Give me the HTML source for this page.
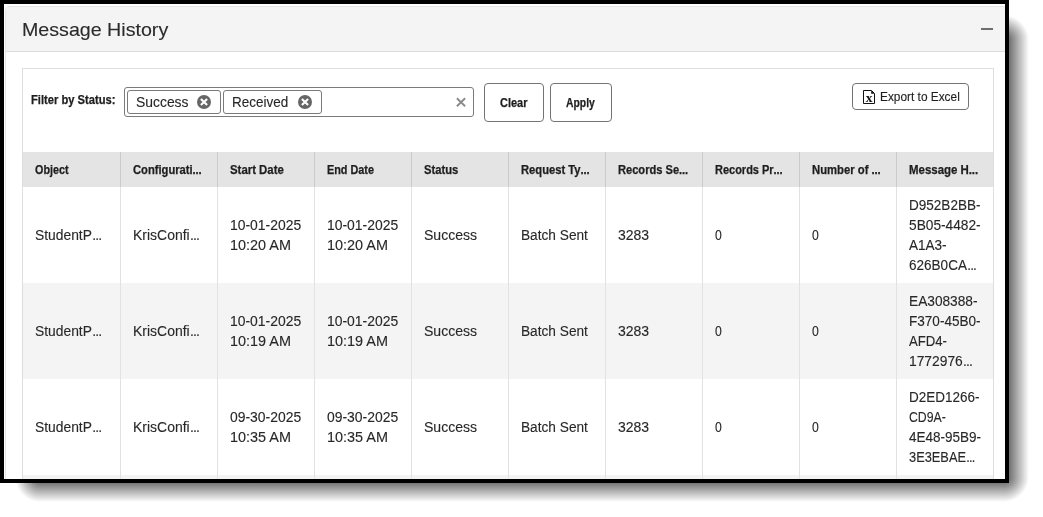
<!DOCTYPE html>
<html>
<head>
<meta charset="utf-8">
<title>Message History</title>
<style>
  * { box-sizing: border-box; margin: 0; padding: 0; }
  html, body { width: 1043px; height: 517px; background: #fff; overflow: hidden; }
  body { font-family: "Liberation Sans", sans-serif; color: #333; position: relative; }

  /* outer screenshot frame */
  #frame {
    position: absolute; left: 0; top: 0; width: 1009px; height: 483px;
    border: 4px solid #000; background: #fff; overflow: hidden; z-index: 2;
  }
  /* soft drop shadow: 9-slice (linear edges, radial corners) */
  #shadow { position: absolute; left: 15px; top: 15px; width: 1014px; height: 487px; z-index: 1; }
  #shadow i { position: absolute; display: block; }
  #shadow .m  { left: 25px; top: 25px; right: 25px; bottom: 25px; background: rgba(0,0,0,0.70); }
  #shadow .r  { right: 0; top: 25px; bottom: 25px; width: 25px; background: linear-gradient(to right, rgba(0,0,0,0.70), rgba(0,0,0,0)); }
  #shadow .l  { left: 0; top: 25px; bottom: 25px; width: 25px; background: linear-gradient(to left, rgba(0,0,0,0.70), rgba(0,0,0,0)); }
  #shadow .b  { bottom: 0; left: 25px; right: 25px; height: 25px; background: linear-gradient(to bottom, rgba(0,0,0,0.70), rgba(0,0,0,0)); }
  #shadow .t2 { top: 0; left: 25px; right: 25px; height: 25px; background: linear-gradient(to top, rgba(0,0,0,0.70), rgba(0,0,0,0)); }
  #shadow .tr { right: 0; top: 0; width: 25px; height: 25px; background: radial-gradient(circle at 0 100%, rgba(0,0,0,0.70) 0, rgba(0,0,0,0) 25px); }
  #shadow .br { right: 0; bottom: 0; width: 25px; height: 25px; background: radial-gradient(circle at 0 0, rgba(0,0,0,0.70) 0, rgba(0,0,0,0) 25px); }
  #shadow .bl { left: 0; bottom: 0; width: 25px; height: 25px; background: radial-gradient(circle at 100% 0, rgba(0,0,0,0.70) 0, rgba(0,0,0,0) 25px); }
  #shadow .tl { left: 0; top: 0; width: 25px; height: 25px; background: radial-gradient(circle at 100% 100%, rgba(0,0,0,0.70) 0, rgba(0,0,0,0) 25px); }
  #inner { position: absolute; left: 0; top: 0; width: 1001px; height: 475px; overflow: hidden; will-change: transform; }

  .t { display: inline-block; transform-origin: 0 50%; white-space: nowrap; -webkit-text-stroke: 0.12px currentColor; }
  .hd .t, .lbl .t, #bclear .t, #bapply .t { -webkit-text-stroke: 0.25px currentColor; }
  .t.b { display: block; }
  .e { letter-spacing: -0.85px; margin-left: 0.3px; }
  .hd .e { letter-spacing: -0.15px; margin-left: 0; }

  /* card */
  #card {
    position: absolute; left: 1px; top: 2px; width: 1010px; height: 520px;
    border: 1px solid #e6e6e6; border-radius: 4px 0 0 0; background: #fff;
  }
  #cardhead {
    position: absolute; left: 0; top: 0; width: 100%; height: 45px;
    background: #f4f4f4; border-bottom: 1px solid #dcdcdc; border-radius: 3px 0 0 0;
  }
  #title {
    position: absolute; left: 16px; top: 11px; font-size: 18.5px; line-height: 24px;
    color: #2b2b2b; white-space: nowrap;
  }
  #collapse { position: absolute; left: 974.7px; top: 21px; width: 12.6px; height: 2px; background: #6e6e6e; }

  /* inner panel */
  #panel {
    position: absolute; left: 16px; top: 61px; width: 972px; height: 460px;
    border: 1px solid #dedede; background: #fff;
  }

  .lbl { position: absolute; left: 8px; top: 24px; font-size: 12px; font-weight: bold; line-height: 14px; color: #1e1e1e; white-space: nowrap; }
  #ms {
    position: absolute; left: 101px; top: 18px; width: 350px; height: 30px;
    border: 1px solid #7a7a7a; border-radius: 3px; background: #fff;
  }
  .chip {
    position: absolute; top: 2px; height: 24px; border: 1px solid #7a7a7a; border-radius: 3px;
    font-size: 14px; line-height: 22px; color: #282828; white-space: nowrap; background: #fff;
  }
  .chip .t { position: absolute; left: 8px; top: 0; }
  .chip svg { position: absolute; top: 3.5px; width: 14px; height: 14px; }
  #msx { position: absolute; left: 331px; top: 9px; width: 10px; height: 10px; }

  .btn {
    position: absolute; border: 1px solid #747474; border-radius: 4px; background: #fff;
    font-size: 12px; font-weight: bold; color: #1e1e1e; white-space: nowrap;
  }
  .btn .t { position: absolute; top: 0; }
  #bclear { left: 461px; top: 14px; width: 60px; height: 39px; line-height: 39px; }
  #bapply { left: 527px; top: 14px; width: 62px; height: 39px; line-height: 39px; }
  #bexport { left: 829px; top: 14px; width: 117px; height: 27px; font-weight: normal; line-height: 27px; }
  #bexport svg { position: absolute; left: 10px; top: 6px; width: 12px; height: 14px; }

  /* table */
  #tbl { position: absolute; left: 0; top: 83px; width: 970px; }
  .row { position: relative; width: 970px; height: 96px; background: #fff; }
  .row.alt { background: #f4f4f4; }
  .row.hd { height: 35px; background: #e4e4e4; }
  .c {
    position: absolute; top: 0; height: 100%; width: 97px; padding: 0 0 0 12px;
    border-left: 1px solid #e2e2e2; font-size: 14px; line-height: 20px; color: #282828;
    display: flex; align-items: center; white-space: nowrap; overflow: hidden;
  }
  .hd .c { font-size: 12px; font-weight: bold; color: #1e1e1e; border-left-color: #cbcbcb; line-height: 14px; }
  .c.c0 { border-left: 0; left: 0; }
  .c1{left:97px}.c2{left:194px}.c3{left:291px}.c4{left:388px}.c5{left:485px}.c6{left:582px}.c7{left:679px}.c8{left:776px}.c9{left:873px}
</style>
</head>
<body>
<div id="shadow"><i class="m"></i><i class="r"></i><i class="l"></i><i class="b"></i><i class="t2"></i><i class="tr"></i><i class="br"></i><i class="bl"></i><i class="tl"></i></div>
<div id="frame"><div id="inner">
  <div id="card">
    <div id="cardhead">
      <div id="title"><span class="t" id="t_title" style="transform:scaleX(1.0613)">Message History</span></div>
      <div id="collapse"></div>
    </div>
    <div id="panel">
      <div class="lbl"><span class="t" id="t_lbl" style="transform:scaleX(0.9311)">Filter by Status:</span></div>
      <div id="ms">
        <div class="chip" style="left:2px;width:94px"><span class="t" id="t_chip1" style="transform:scaleX(0.9923)">Success</span>
          <svg style="left:69px" viewBox="0 0 14 14"><circle cx="7" cy="7" r="7" fill="#666"/><path d="M3.9 3.9 L10.1 10.1 M10.1 3.9 L3.9 10.1" stroke="#fff" stroke-width="2.1"/></svg>
        </div>
        <div class="chip" style="left:98px;width:99px"><span class="t" id="t_chip2" style="left:8px;transform:scaleX(0.9632)">Received</span>
          <svg style="left:74px" viewBox="0 0 14 14"><circle cx="7" cy="7" r="7" fill="#666"/><path d="M3.9 3.9 L10.1 10.1 M10.1 3.9 L3.9 10.1" stroke="#fff" stroke-width="2.1"/></svg>
        </div>
        <svg id="msx" viewBox="0 0 10 10"><path d="M0.9 1.2 L9.1 9.2 M9.1 1.2 L0.9 9.2" stroke="#8a8a8a" stroke-width="1.9"/></svg>
      </div>
      <div class="btn" id="bclear"><span class="t" id="t_clear" style="left:15px;transform:scaleX(0.9133)">Clear</span></div>
      <div class="btn" id="bapply"><span class="t" id="t_apply" style="left:15px;transform:scaleX(0.8647)">Apply</span></div>
      <div class="btn" id="bexport">
        <svg viewBox="0 0 12 14"><path d="M0.5 0.5 H8.5 L11.5 3.5 V13.5 H0.5 Z" fill="#fff" stroke="#111" stroke-width="1"/><path d="M8.2 0.6 V3.8 H11.4 Z" fill="#111"/><text x="6.05" y="11.6" text-anchor="middle" font-family="Liberation Serif, serif" font-weight="bold" font-size="13.5" fill="#111">x</text></svg>
        <span class="t" id="t_export" style="left:27px;transform:scaleX(0.9886)">Export to Excel</span>
      </div>

      <div id="tbl">
        <div class="row hd"><div class="c c0"><span class="t" id="t_h0" style="transform:scaleX(0.8974)">Object</span></div><div class="c c1"><span class="t" id="t_h1" style="transform:scaleX(0.9315)">Configurati<span class="e">...</span></span></div><div class="c c2"><span class="t" id="t_h2" style="transform:scaleX(0.9491)">Start Date</span></div><div class="c c3"><span class="t" id="t_h3" style="transform:scaleX(0.9038)">End Date</span></div><div class="c c4"><span class="t" id="t_h4" style="transform:scaleX(0.9351)">Status</span></div><div class="c c5"><span class="t" id="t_h5" style="transform:scaleX(0.9329)">Request Ty<span class="e">...</span></span></div><div class="c c6"><span class="t" id="t_h6" style="transform:scaleX(0.9253)">Records Se<span class="e">...</span></span></div><div class="c c7"><span class="t" id="t_h7" style="transform:scaleX(0.9151)">Records Pr<span class="e">...</span></span></div><div class="c c8"><span class="t" id="t_h8" style="transform:scaleX(0.9397)">Number of <span class="e">...</span></span></div><div class="c c9"><span class="t" id="t_h9" style="transform:scaleX(0.9542)">Message H<span class="e">...</span></span></div></div>
        <div class="row"><div class="c c0"><span class="t" id="t_stu0" style="transform:scaleX(0.9879)">StudentP<span class="e">...</span></span></div><div class="c c1"><span class="t" id="t_kri0" style="transform:scaleX(0.9985)">KrisConfi<span class="e">...</span></span></div><div class="c c2"><div class="ml"><span class="t b" id="t_date02" style="transform:scaleX(0.9943)">10-01-2025</span><span class="t b" id="t_time02" style="transform:scaleX(1.0298)">10:20 AM</span></div></div><div class="c c3"><div class="ml"><span class="t b" id="t_date03" style="transform:scaleX(0.9943)">10-01-2025</span><span class="t b" id="t_time03" style="transform:scaleX(1.0298)">10:20 AM</span></div></div><div class="c c4"><span class="t" id="t_suc0" style="transform:scaleX(1.0038)">Success</span></div><div class="c c5"><span class="t" id="t_bat0" style="transform:scaleX(0.9765)">Batch Sent</span></div><div class="c c6"><span class="t" id="t_n32830" style="transform:scaleX(1.0000)">3283</span></div><div class="c c7"><span class="t" id="t_zero07" style="transform:scaleX(0.8750)">0</span></div><div class="c c8"><span class="t" id="t_zero08" style="transform:scaleX(0.8750)">0</span></div><div class="c c9"><div class="ml"><span class="t b" id="t_hash00" style="transform:scaleX(0.9671)">D952B2BB-</span><span class="t b" id="t_hash01" style="transform:scaleX(0.9795)">5B05-4482-</span><span class="t b" id="t_hash02" style="transform:scaleX(0.9667)">A1A3-</span><span class="t b" id="t_hash03" style="transform:scaleX(0.9667)">626B0CA<span class="e">...</span></span></div></div></div>
        <div class="row alt"><div class="c c0"><span class="t" id="t_stu1" style="transform:scaleX(0.9879)">StudentP<span class="e">...</span></span></div><div class="c c1"><span class="t" id="t_kri1" style="transform:scaleX(0.9985)">KrisConfi<span class="e">...</span></span></div><div class="c c2"><div class="ml"><span class="t b" id="t_date12" style="transform:scaleX(0.9943)">10-01-2025</span><span class="t b" id="t_time12" style="transform:scaleX(1.0298)">10:19 AM</span></div></div><div class="c c3"><div class="ml"><span class="t b" id="t_date13" style="transform:scaleX(0.9943)">10-01-2025</span><span class="t b" id="t_time13" style="transform:scaleX(1.0298)">10:19 AM</span></div></div><div class="c c4"><span class="t" id="t_suc1" style="transform:scaleX(1.0038)">Success</span></div><div class="c c5"><span class="t" id="t_bat1" style="transform:scaleX(0.9765)">Batch Sent</span></div><div class="c c6"><span class="t" id="t_n32831" style="transform:scaleX(1.0000)">3283</span></div><div class="c c7"><span class="t" id="t_zero17" style="transform:scaleX(0.8750)">0</span></div><div class="c c8"><span class="t" id="t_zero18" style="transform:scaleX(0.8750)">0</span></div><div class="c c9"><div class="ml"><span class="t b" id="t_hash10" style="transform:scaleX(0.9783)">EA308388-</span><span class="t b" id="t_hash11" style="transform:scaleX(0.9685)">F370-45B0-</span><span class="t b" id="t_hash12" style="transform:scaleX(0.9375)">AFD4-</span><span class="t b" id="t_hash13" style="transform:scaleX(0.9873)">1772976<span class="e">...</span></span></div></div></div>
        <div class="row"><div class="c c0"><span class="t" id="t_stu2" style="transform:scaleX(0.9879)">StudentP<span class="e">...</span></span></div><div class="c c1"><span class="t" id="t_kri2" style="transform:scaleX(0.9985)">KrisConfi<span class="e">...</span></span></div><div class="c c2"><div class="ml"><span class="t b" id="t_date22" style="transform:scaleX(0.9943)">09-30-2025</span><span class="t b" id="t_time22" style="transform:scaleX(1.0298)">10:35 AM</span></div></div><div class="c c3"><div class="ml"><span class="t b" id="t_date23" style="transform:scaleX(0.9943)">09-30-2025</span><span class="t b" id="t_time23" style="transform:scaleX(1.0298)">10:35 AM</span></div></div><div class="c c4"><span class="t" id="t_suc2" style="transform:scaleX(1.0038)">Success</span></div><div class="c c5"><span class="t" id="t_bat2" style="transform:scaleX(0.9765)">Batch Sent</span></div><div class="c c6"><span class="t" id="t_n32832" style="transform:scaleX(1.0000)">3283</span></div><div class="c c7"><span class="t" id="t_zero27" style="transform:scaleX(0.8750)">0</span></div><div class="c c8"><span class="t" id="t_zero28" style="transform:scaleX(0.8750)">0</span></div><div class="c c9"><div class="ml"><span class="t b" id="t_hash20" style="transform:scaleX(0.9625)">D2ED1266-</span><span class="t b" id="t_hash21" style="transform:scaleX(0.8762)">CD9A-</span><span class="t b" id="t_hash22" style="transform:scaleX(0.9649)">4E48-95B9-</span><span class="t b" id="t_hash23" style="transform:scaleX(0.9153)">3E3EBAE<span class="e">...</span></span></div></div></div>
        <div class="row alt"><div class="c c0"></div><div class="c c1"></div><div class="c c2"></div><div class="c c3"></div><div class="c c4"></div><div class="c c5"></div><div class="c c6"></div><div class="c c7"></div><div class="c c8"></div><div class="c c9"></div></div>
      </div>
    </div>
  </div>
</div></div>
</body>
</html>
